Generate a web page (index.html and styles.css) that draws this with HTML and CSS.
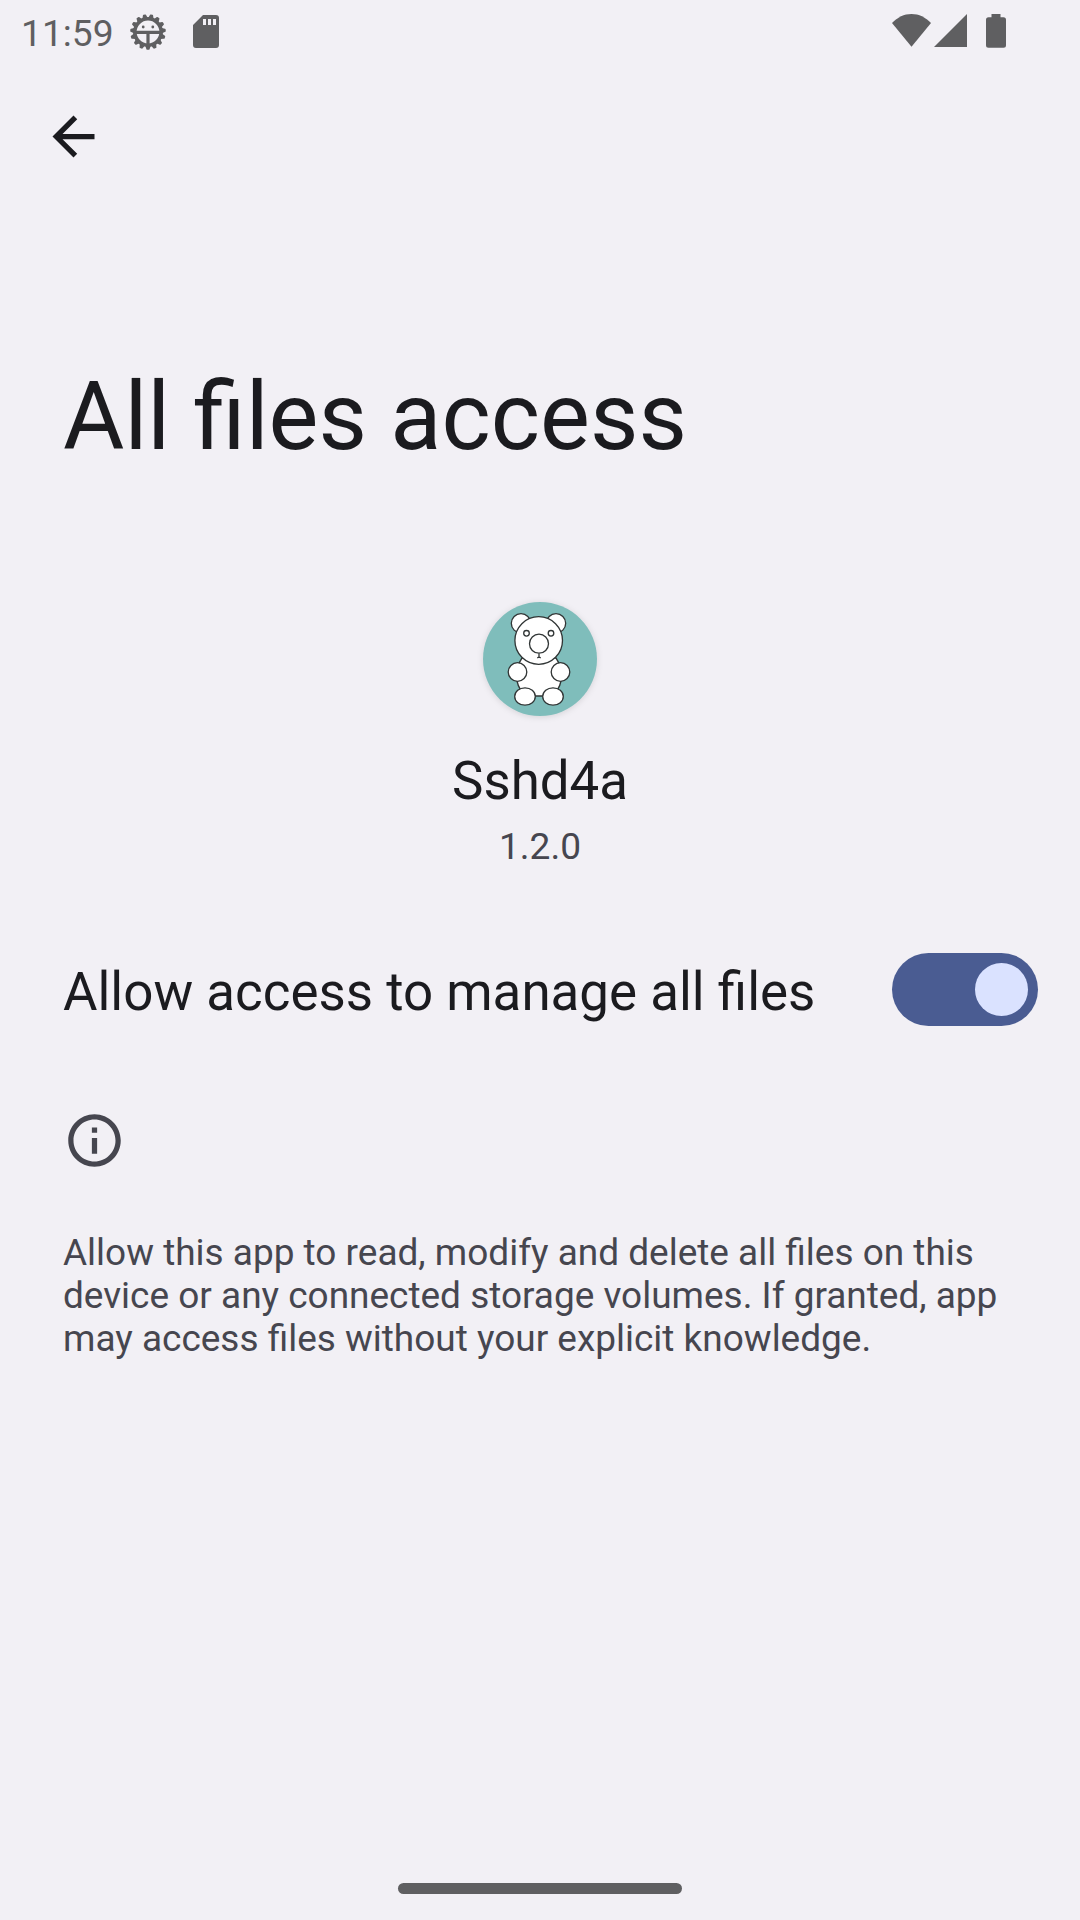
FILE: index.html
```html
<!DOCTYPE html>
<html lang="en">
<head>
<meta charset="utf-8">
<title>All files access</title>
<link rel="stylesheet" href="styles.css">
</head>
<body>
<div class="screen">
  <header class="status">
    <div class="status-left">
      <span class="clock">11:59</span>
      <svg class="gear" viewBox="-19 -19 38 38">
        <defs><path id="tooth" d="M-2.200 13-.8 17H.8L2.200 13Z"/></defs>
        <g class="teeth">
          <use href="#tooth"/><use href="#tooth" transform="rotate(24)"/><use href="#tooth" transform="rotate(48)"/><use href="#tooth" transform="rotate(72)"/><use href="#tooth" transform="rotate(96)"/><use href="#tooth" transform="rotate(120)"/><use href="#tooth" transform="rotate(144)"/><use href="#tooth" transform="rotate(168)"/><use href="#tooth" transform="rotate(192)"/><use href="#tooth" transform="rotate(216)"/><use href="#tooth" transform="rotate(240)"/><use href="#tooth" transform="rotate(264)"/><use href="#tooth" transform="rotate(288)"/><use href="#tooth" transform="rotate(312)"/><use href="#tooth" transform="rotate(336)"/>
        </g>
        <circle class="ring" r="13.2"/>
        <path class="spokes" d="M-12 .4H12M0 .4V12"/>
        <circle cx="-4.800" cy="-5" r="1.400"/><circle cx="4.800" cy="-5" r="1.400"/>
      </svg>
      <svg class="sd" viewBox="0 0 26 33"><path fill-rule="evenodd" d="M10 0H23a3 3 0 0 1 3 3V30a3 3 0 0 1-3 3H3a3 3 0 0 1-3-3V10ZM10 4v6h3V4ZM15 4v6h3V4ZM20 4v6h3V4Z"/></svg>
    </div>
    <div class="status-right">
      <svg class="wifi" viewBox="0 0 39 33"><path d="M19.500 32.700 0 9C5.500 3.300 12 0 19.500 0S33.500 3.300 39 9Z"/></svg>
      <svg class="signal" viewBox="0 0 33 33"><path d="M0 33 33 0V33Z"/></svg>
      <svg class="battery" viewBox="0 0 20 34"><path d="M5.500 0H14.500V3.300H17.500A2.500 2.500 0 0 1 20 5.800V31.300A2.500 2.500 0 0 1 17.500 33.800H2.500A2.500 2.500 0 0 1 0 31.300V5.800A2.500 2.500 0 0 1 2.500 3.300H5.500Z"/></svg>
    </div>
  </header>
  <nav class="toolbar">
    <svg class="back" viewBox="0 0 24 24"><path d="M20 11H7.830l5.590-5.590L12 4l-8 8 8 8 1.410-1.410L7.830 13H20z"/></svg>
  </nav>
  <h1 class="title">All files access</h1>
  <section class="app">
    <svg class="app-icon" viewBox="0 0 114 114">
      <circle class="disc" cx="57" cy="57" r="57"/>
      <g class="bear">
        <circle cx="38" cy="21.300" r="9.700"/><circle cx="73" cy="21.300" r="9.700"/>
        <path d="M39 56Q33 64 34 79Q36 89 44 94H68Q76 89 78 79Q79 64 73 56Z"/>
        <circle cx="55.700" cy="38.500" r="23.800"/>
        <circle cx="43.500" cy="31.300" r="2.800"/><circle cx="68" cy="31.300" r="2.800"/>
        <circle cx="56" cy="41.700" r="9.500"/>
        <path d="M56 51.500V55M54.300 56 56 54.800 57.700 56"/>
        <circle cx="34.500" cy="70" r="9.300"/><circle cx="77.500" cy="70" r="9.300"/>
        <ellipse cx="42" cy="94.500" rx="10.300" ry="8.700"/><ellipse cx="70" cy="94.500" rx="10.300" ry="8.700"/>
      </g>
    </svg>
    <div class="app-name">Sshd4a</div>
    <div class="app-version">1.2.0</div>
  </section>
  <section class="setting">
    <span class="setting-label">Allow access to manage all files</span>
    <span class="switch"><span class="thumb"></span></span>
  </section>
  <section class="info">
    <svg class="info-icon" viewBox="0 0 24 24"><path d="M11 7h2v2h-2zM11 11h2v6h-2zM12 2C6.480 2 2 6.480 2 12s4.480 10 10 10 10-4.480 10-10S17.520 2 12 2zM12 20c-4.410 0-8-3.590-8-8s3.590-8 8-8 8 3.590 8 8-3.590 8-8 8z"/></svg>
    <p class="info-text">Allow this app to read, modify and delete all files on this<br>device or any connected storage volumes. If granted, app<br>may access files without your explicit knowledge.</p>
  </section>
  <footer class="nav"><div class="handle"></div></footer>
</div>
</body>
</html>
```
FILE: styles.css
```css
* { box-sizing: border-box; margin: 0; padding: 0; }
body { background: #f2f0f5; color: #1b1b1f; font-family: Roboto, sans-serif; }
svg { display: block; flex: none; overflow: visible; }
.screen { width: 1080px; height: 1920px; display: flex; flex-direction: column; overflow: hidden; }
.status { height: 63px; display: flex; justify-content: space-between; color: #5f5f61; padding: 0 74px 0 21px; }
.status svg { fill: #5f5f61; }
.status-left, .status-right { display: flex; align-items: flex-start; }
.clock { width: 108px; font-size: 37.2px; line-height: 43px; padding-top: 12px; white-space: nowrap; }
.gear { width: 38px; height: 38px; margin-top: 12.5px; }
.teeth { stroke: #5f5f61; stroke-width: 1.6; stroke-linejoin: round; }
.gear .ring { fill: none; stroke: #5f5f61; stroke-width: 3.6; }
.gear .spokes { fill: none; stroke: #5f5f61; stroke-width: 3.2; }
.sd { width: 26px; height: 33px; margin: 15px 0 0 26px; }
.wifi { width: 39px; height: 33px; margin: 14px 3px 0 0; }
.signal { width: 33px; height: 33px; margin: 14px 19px 0 0; }
.battery { width: 20px; height: 34px; margin-top: 14px; }
.toolbar { height: 298px; padding: 42px; }
.back { width: 63px; height: 63px; fill: #1b1b1f; }
.title { height: 111px; padding-left: 63px; font-size: 94.1px; line-height: 113px; font-weight: 400; }
.app { padding-top: 130px; display: flex; flex-direction: column; align-items: center; }
.app-icon { width: 114px; height: 114px; filter: drop-shadow(0 1px 3px rgba(0,0,0,.12)); }
.disc { fill: #7fbdbb; }
.bear { fill: #fff; stroke: #303535; stroke-width: 1.3; }
.app-name { margin-top: 34px; font-size: 52.8px; line-height: 62px; }
.app-version { margin-top: 13px; font-size: 37.1px; line-height: 43px; color: #46464f; }
.setting { margin-top: 85px; height: 73px; padding: 0 42px 0 63px; display: flex; align-items: center; justify-content: space-between; }
.setting-label { font-size: 52.9px; line-height: 62px; padding-top: 4px; white-space: nowrap; }
.switch { width: 146px; height: 73px; border-radius: 37px; background: #4a5c92; padding: 10px; display: flex; justify-content: flex-end; }
.thumb { width: 53px; height: 53px; border-radius: 50%; background: #dae2ff; }
.info { padding: 83px 63px 0; color: #46464f; }
.info-icon { width: 63px; height: 63px; fill: #46464f; }
.info-text { margin-top: 59px; font-size: 36.97px; line-height: 43px; white-space: nowrap; }
.nav { margin-top: auto; height: 37px; display: flex; justify-content: center; }
.handle { width: 284px; height: 11px; border-radius: 6px; background: #5f5f61; }
```
